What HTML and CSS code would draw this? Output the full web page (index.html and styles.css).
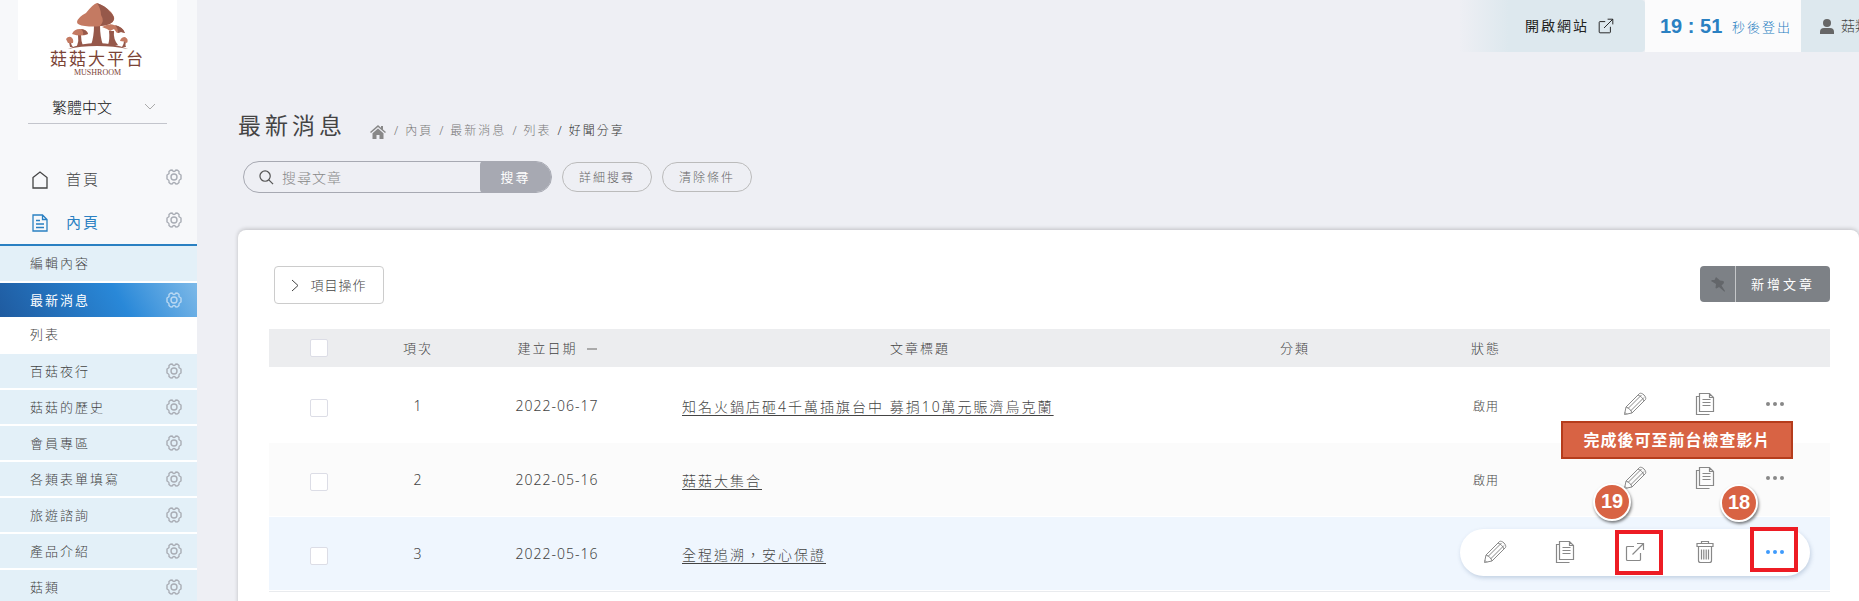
FILE: index.html
```html
<!DOCTYPE html>
<html lang="zh-Hant">
<head>
<meta charset="UTF-8">
<meta name="viewport" content="width=device-width, initial-scale=1.0">
<title>菇菇大平台 - 最新消息</title>
<link rel="stylesheet" href="styles.css">
</head>
<body>
  <svg class="sprite" aria-hidden="true">
    <symbol id="i-gear" viewBox="0 0 16 16">
      <path d="M4.500 1.200L6 1q1 1.500 2 1.500T10 1l1.500.2 1.500 1.300q-.3 2 .5 2.500l1.500 1v4l-1.500 1q-.8.5-.5 2.500l-1.500 1.300-1.500.2q-1-1.500-2-1.500T6 15l-1.500-.2L3 13.500q.3-2-.5-2.500L1 10V6l1.500-1q.8-.5.500-2.500z"/>
      <circle cx="8" cy="8" r="3"/>
    </symbol>
    <symbol id="i-pencil" viewBox="0 0 24 24">
      <path d="M1.500 22.500l1.500-7.500L16.500 1.500c2.500-1.500 7.500 3.500 6 6L9 21zM3 15c2.500.5 5.500 3.500 6 6M5 16.500L18.500 3M7.500 19L21 5.500M15 3c2.500.8 5.200 3.500 6 6M1.800 20.300l2 2"/>
    </symbol>
    <symbol id="i-copy" viewBox="0 0 20 24">
      <path d="M4.500 1.500h10l4 4v14h-14zM14.500 1.500v4h4M7.500 7.500h8M7.500 10.500h8M7.500 13.500h8M4.500 4.500h-3v18h13"/>
    </symbol>
    <symbol id="i-open" viewBox="0 0 20 20">
      <path d="M9 4.500H2.500q-1 0-1 1v12q0 1 1 1h12q1 0 1-1V11M12 1.500h6.500V8M18.500 1.500L7.500 12.500"/>
    </symbol>
    <symbol id="i-trash" viewBox="0 0 18 24">
      <path d="M1 3.500h16v3H1zM5.500 3.500v-2h7v2M2.500 6.500v14q0 2 2 2h9q2 0 2-2v-14M5.500 9.500v10M7.800 9.500v10M10.200 9.500v10M12.500 9.500v10"/>
    </symbol>
    <symbol id="i-dots" viewBox="0 0 20 6">
      <circle cx="3" cy="3" r="2"/><circle cx="10" cy="3" r="2"/><circle cx="17" cy="3" r="2"/>
    </symbol>
  </svg>

  <aside class="sidebar">
    <a class="logo" href="#">
      <svg viewBox="0 0 64 47" aria-hidden="true">
        <g fill="#96584a">
          <path d="M2 46q12-6 29-6t31 6q-14-3-31-3T2 46z"/>
          <path d="M28 22h6q0 12 3 20H25q3-8 3-20zM12 32h3q0 6 2 11h-6q2-5 1-11zM43 28h5q-1 8 4 14H42q2-6 1-14zM3 39h2q0 3 2 5H4zM58 38h2q-1 4 0 6h-4q2-3 2-6z"/>
        </g>
        <path fill="#c47a62" d="M11 19q1-5 9-9 7-9 11-10 9 4 14 9 4 5 3 8-2 5-13 6-8 1-16 0-8-1-8-4z"/>
        <path fill="#96584a" d="M31 0q9 3 12 8 5 4 5 8-1 6-14 7 5-5 1-11 0-6-4-12z"/>
        <path fill="#c47a62" d="M6 31q2-5 8-5 7 0 8 5-7 3-16 0z"/>
        <path fill="#96584a" d="M15 26q6 1 7 5l-5 1q1-3-2-6z"/>
        <path fill="#c47a62" d="M36 24q7-4 12-2 9 2 11 8l-4-1-4 1-3-4-4 2-3-2z"/>
        <path fill="#96584a" d="M49 22q8 2 10 8l-4-1-3 1q0-5-3-8z"/>
        <path fill="#c47a62" d="M0 36q2-3 5-2 3 2 2 6H2zM54 38q1-4 5-4 4 2 2 6-3-2-7-2z"/>
      </svg>
      <strong>菇菇大平台</strong>
      <small>MUSHROOM</small>
    </a>
    <div class="language">
      <select aria-label="語言">
        <option>繁體中文</option>
      </select>
      <svg viewBox="0 0 12 8" aria-hidden="true"><path d="M1 1l5 5 5-5"/></svg>
    </div>

    <nav>
      <ul class="main-nav">
        <li>
          <a href="#"><svg class="nav-icon" viewBox="0 0 16 18"><path d="M1 6.500L8 1l7 5.500v10.500H1z"/></svg><span>首頁</span></a>
          <button class="gear" aria-label="設定"><svg><use href="#i-gear"/></svg></button>
        </li>
        <li class="current">
          <a href="#"><svg class="nav-icon" viewBox="0 0 16 18"><path d="M1 1h9.500L15 5.500V17H1zM10.500 1v4.500H15M4 6.500h4M4 10h8M4 13.500h8"/></svg><span>內頁</span></a>
          <button class="gear" aria-label="設定"><svg><use href="#i-gear"/></svg></button>
        </li>
      </ul>
      <ul class="sub-nav">
        <li><a href="#">編輯內容</a></li>
        <li class="active"><a href="#">最新消息</a><button class="gear" aria-label="設定"><svg><use href="#i-gear"/></svg></button></li>
        <li class="child"><a href="#">列表</a></li>
        <li><a href="#">百菇夜行</a><button class="gear" aria-label="設定"><svg><use href="#i-gear"/></svg></button></li>
        <li><a href="#">菇菇的歷史</a><button class="gear" aria-label="設定"><svg><use href="#i-gear"/></svg></button></li>
        <li><a href="#">會員專區</a><button class="gear" aria-label="設定"><svg><use href="#i-gear"/></svg></button></li>
        <li><a href="#">各類表單填寫</a><button class="gear" aria-label="設定"><svg><use href="#i-gear"/></svg></button></li>
        <li><a href="#">旅遊諮詢</a><button class="gear" aria-label="設定"><svg><use href="#i-gear"/></svg></button></li>
        <li><a href="#">產品介紹</a><button class="gear" aria-label="設定"><svg><use href="#i-gear"/></svg></button></li>
        <li><a href="#">菇類</a><button class="gear" aria-label="設定"><svg><use href="#i-gear"/></svg></button></li>
      </ul>
    </nav>
  </aside>

  <div class="page">
    <header class="topbar">
      <a class="open-site" href="#"><span>開啟網站</span><svg><use href="#i-open"/></svg></a>
      <div class="timer"><b>19 : 51</b><span>秒後登出</span></div>
      <a class="user" href="#">
        <svg viewBox="0 0 14 15"><circle cx="7" cy="4" r="4"/><path d="M0 15v-2q0-4 4-4h6q4 0 4 4v2z"/></svg>
        <span>菇類</span>
      </a>
    </header>

    <main>
      <div class="heading">
        <h1>最新消息</h1>
        <ol class="breadcrumb">
          <li><a href="#" aria-label="首頁"><svg viewBox="0 0 16 14"><path d="M8 0l3 2.700V1h2v3.400L16 7l-1 1-7-6-7 6-1-1zM8 3.500l5.500 4.700V14H9.500v-4h-3v4h-4V8.200z"/></svg></a></li>
          <li><a href="#">內頁</a></li>
          <li><a href="#">最新消息</a></li>
          <li><a href="#">列表</a></li>
          <li class="here">好聞分享</li>
        </ol>
      </div>

      <form class="search">
        <div class="search-box">
          <svg viewBox="0 0 16 16" aria-hidden="true"><circle cx="6.500" cy="6.500" r="5.500"/><path d="M10.500 10.500l4.500 4.500"/></svg>
          <input type="text" aria-label="搜尋文章" placeholder="搜尋文章">
          <button type="submit">搜尋</button>
        </div>
        <button class="pill" type="button">詳細搜尋</button>
        <button class="pill" type="reset">清除條件</button>
      </form>

      <section class="card">
        <div class="toolbar">
          <button class="batch"><svg viewBox="0 0 8 13"><path d="M1 1l6 5.500-6 5.500"/></svg><span>項目操作</span></button>
          <div class="add">
            <button class="pin" aria-label="釘選"><svg viewBox="0 0 14 15"><path d="M5 0l4 3.500 3.500.5.500 2-2.500 2.500L14 14l-.5.700L8 10l-2.500 1.500-1-.5.500-4-5-3 1-1h2.500L4.500 1z"/></svg></button>
            <button class="new">新增文章</button>
          </div>
        </div>

        <table>
          <colgroup>
            <col class="c-check"><col class="c-no"><col class="c-date"><col><col class="c-cat"><col class="c-status"><col class="c-ops">
          </colgroup>
          <thead>
            <tr>
              <th class="check"><input type="checkbox" aria-label="全選"></th>
              <th>項次</th>
              <th>建立日期<i class="sort"></i></th>
              <th>文章標題</th>
              <th>分類</th>
              <th>狀態</th>
              <th></th>
            </tr>
          </thead>
          <tbody>
            <tr>
              <td class="check"><input type="checkbox" aria-label="選取 1"></td>
              <td>1</td>
              <td>2022-06-17</td>
              <td class="title"><a href="#">知名火鍋店砸4千萬插旗台中 募捐10萬元賑濟烏克蘭</a></td>
              <td></td>
              <td class="status">啟用</td>
              <td class="ops">
                <div class="actions">
                  <button aria-label="編輯"><svg class="pencil"><use href="#i-pencil"/></svg></button>
                  <button aria-label="複製"><svg class="copy"><use href="#i-copy"/></svg></button>
                  <button aria-label="更多"><svg class="dots"><use href="#i-dots"/></svg></button>
                </div>
              </td>
            </tr>
            <tr>
              <td class="check"><input type="checkbox" aria-label="選取 2"></td>
              <td>2</td>
              <td>2022-05-16</td>
              <td class="title"><a href="#">菇菇大集合</a></td>
              <td></td>
              <td class="status">啟用</td>
              <td class="ops">
                <div class="actions">
                  <button aria-label="編輯"><svg class="pencil"><use href="#i-pencil"/></svg></button>
                  <button aria-label="複製"><svg class="copy"><use href="#i-copy"/></svg></button>
                  <button aria-label="更多"><svg class="dots"><use href="#i-dots"/></svg></button>
                </div>
              </td>
            </tr>
            <tr class="hover">
              <td class="check"><input type="checkbox" aria-label="選取 3"></td>
              <td>3</td>
              <td>2022-05-16</td>
              <td class="title"><a href="#">全程追溯，安心保證</a></td>
              <td></td>
              <td></td>
              <td class="ops">
                <div class="actions open">
                  <button aria-label="編輯"><svg class="pencil"><use href="#i-pencil"/></svg></button>
                  <button aria-label="複製"><svg class="copy"><use href="#i-copy"/></svg></button>
                  <button aria-label="檢視"><svg class="view"><use href="#i-open"/></svg></button>
                  <button aria-label="刪除"><svg class="trash"><use href="#i-trash"/></svg></button>
                  <button class="on" aria-label="更多"><svg class="dots"><use href="#i-dots"/></svg></button>
                  <!-- step callouts -->
                  <span class="note">完成後可至前台檢查影片</span>
                  <span class="step step-19">19</span>
                  <span class="step step-18">18</span>
                  <span class="mark mark-view"></span>
                  <span class="mark mark-more"></span>
                </div>
              </td>
            </tr>
          </tbody>
        </table>
      </section>
    </main>
  </div>
</body>
</html>
```
FILE: styles.css
```css
* {
  box-sizing: border-box;
}

body {
  margin: 0;
  display: flex;
  min-height: 100vh;
  overflow: hidden;
  background: #eeeff4;
  color: #444;
  font-family: "Noto Sans", "Noto Sans CJK TC", sans-serif;
  font-size: 14px;
  font-weight: 300;
}

a {
  color: inherit;
  text-decoration: none;
}

ul,
ol {
  list-style: none;
  margin: 0;
  padding: 0;
}

button,
input,
select {
  font: inherit;
  color: inherit;
}

button {
  padding: 0;
  border: none;
  background: none;
  cursor: pointer;
}

svg {
  display: block;
  flex: none;
  fill: none;
  stroke: currentColor;
}

.sprite {
  position: absolute;
  width: 0;
  height: 0;
}

/* sidebar */
.sidebar {
  flex: none;
  width: 197px;
  background: #f7f8fa;
}

.logo {
  display: flex;
  flex-direction: column;
  align-items: center;
  width: 159px;
  height: 80px;
  margin: 0 auto 0 18px;
  padding-top: 3px;
  background: #fff;
  color: #7b4336;
}

.logo svg {
  width: 64px;
  height: 47px;
  stroke: none;
}

.logo strong {
  font-size: 17px;
  font-weight: 400;
  line-height: 18px;
  letter-spacing: 2px;
}

.logo small {
  font-family: "Liberation Serif", serif;
  font-size: 8px;
  font-weight: 400;
  line-height: 10px;
}

.language {
  display: flex;
  align-items: center;
  width: 139px;
  height: 32px;
  margin: 12px 0 0 28px;
  padding: 0 11px 2px 24px;
  border-bottom: 1px solid #c3c5cc;
  color: #111;
}

.language select {
  flex: 1;
  appearance: none;
  border: none;
  padding: 0;
  background: none;
  font-size: 15px;
}

.language svg {
  width: 12px;
  height: 8px;
  color: #aaa;
}

.main-nav {
  padding-top: 34px;
}

.main-nav li,
.sub-nav li {
  display: flex;
  align-items: center;
  justify-content: space-between;
  padding-right: 15px;
}

.main-nav li {
  height: 43px;
}

.main-nav a {
  display: flex;
  align-items: center;
  padding-left: 32px;
  font-size: 15px;
  letter-spacing: 2px;
}

.main-nav span,
.sub-nav a,
.open-site span,
.user span,
.batch span {
  padding-bottom: 2px;
}

.nav-icon {
  width: 16px;
  height: 18px;
  margin-right: 18px;
  stroke-width: 1.300;
}

.main-nav .current {
  color: #2a80c2;
  font-weight: 400;
}

.gear,
.main-nav .current .gear {
  color: #a9adb5;
}

.main-nav .gear {
  margin-bottom: 6px;
}

.gear svg {
  width: 16px;
  height: 16px;
  stroke-width: 1.400;
}

.sub-nav {
  border-top: 2px solid #2a80c2;
}

.sub-nav li {
  height: 36px;
  padding-left: 30px;
  border-bottom: 2px solid #fff;
  background: #e3f0f8;
  font-size: 13px;
  letter-spacing: 2px;
}

.sub-nav li:first-child {
  height: 37px;
}

.sub-nav .active {
  border-bottom: none;
  height: 34px;
  background: linear-gradient(60deg, #1f5ba0, #2988d8 60%, #7db9e8);
  color: #fff;
  font-weight: 400;
}

.sub-nav .active .gear {
  color: #b9d8f2;
}

.sub-nav .child {
  height: 37px;
  background: #fff;
}

/* top bar */
.page {
  flex: 1;
  min-width: 0;
}

.topbar {
  display: flex;
  justify-content: flex-end;
  height: 52px;
}

.topbar > * {
  display: flex;
  align-items: center;
}

.open-site {
  padding: 0 31px 0 66px;
  background: linear-gradient(to right, #eeeff4, #dde8ee 50px);
  color: #222;
  font-weight: 400;
  letter-spacing: 2px;
  border-radius: 0 4px 4px 0;
}

.open-site svg {
  width: 16px;
  height: 16px;
  margin-left: 9px;
}

.timer {
  width: 156px;
  padding-left: 15px;
  background: #fbfbfc;
  color: #2a80c2;
}

.timer b {
  width: 72px;
  font-family: "Liberation Sans", sans-serif;
  font-size: 20px;
  font-weight: 700;
}

.timer span {
  font-size: 13px;
  letter-spacing: 2px;
}

.user {
  width: 58px;
  padding-left: 19px;
  overflow: hidden;
  background: #dde8ee;
  white-space: nowrap;
}

.user svg {
  width: 14px;
  height: 15px;
  margin-right: 7px;
  fill: #666;
  stroke: none;
}

/* heading and search */
main {
  padding: 54px 0 0 41px;
}

.heading {
  display: flex;
  align-items: flex-end;
  height: 37px;
}

h1 {
  margin: 0 24px 0 0;
  font-size: 23px;
  font-weight: 400;
  line-height: 36px;
  letter-spacing: 4px;
}

.breadcrumb {
  display: flex;
  align-items: center;
  font-size: 12px;
  line-height: 25px;
  letter-spacing: 2px;
  color: #777;
}

.breadcrumb svg {
  width: 16px;
  height: 14px;
  margin: 2px 2px 0 0;
  fill: #888;
  stroke: none;
}

.breadcrumb li + li::before {
  content: "/";
  margin: 0 5px 0 6px;
}

.breadcrumb .here {
  color: #333;
}

.search {
  display: flex;
  align-items: center;
  gap: 10px;
  margin: 18px 0 37px 5px;
}

.search-box {
  display: flex;
  align-items: center;
  width: 309px;
  height: 32px;
  padding-left: 15px;
  overflow: hidden;
  border: 1px solid #a7a9b2;
  border-radius: 16px;
}

.search-box svg {
  width: 15px;
  height: 15px;
  color: #555;
  stroke-width: 1.300;
}

.search-box input {
  flex: 1;
  min-width: 0;
  padding: 0 0 0 8px;
  border: none;
  outline: none;
  background: none;
  letter-spacing: 1px;
}

.search-box input::placeholder {
  color: #888;
}

.search-box button {
  width: 71px;
  height: 32px;
  padding-bottom: 2px;
  border-radius: 4px 0 0 4px;
  background: #a7a9b2;
  color: #fff;
  font-size: 13px;
  font-weight: 400;
  letter-spacing: 2px;
}

.pill {
  width: 90px;
  height: 30px;
  border: 1px solid #bbb;
  border-radius: 15px;
  color: #666;
  font-size: 12px;
  letter-spacing: 2px;
}

/* list */
.card {
  min-height: 400px;
  padding: 36px 29px 0 31px;
  border-radius: 8px;
  background: #fff;
  box-shadow: 0 -1px 4px rgba(0, 0, 0, 0.2);
}

.toolbar {
  display: flex;
  justify-content: space-between;
  align-items: flex-start;
  margin-bottom: 25px;
  padding-left: 5px;
}

.batch {
  display: flex;
  align-items: center;
  justify-content: center;
  gap: 11px;
  width: 110px;
  height: 38px;
  border: 1px solid #ccc;
  border-radius: 4px;
  font-size: 13px;
  letter-spacing: 1px;
}

.batch svg {
  width: 8px;
  height: 13px;
}

.add {
  display: flex;
  height: 36px;
  overflow: hidden;
  border-radius: 4px;
  background: #7d8186;
}

.pin {
  width: 36px;
  padding-left: 11px;
  border-right: 1px solid #c5c7c9;
}

.pin svg {
  width: 14px;
  height: 15px;
  fill: #63666a;
  stroke: none;
}

.new {
  width: 94px;
  padding-bottom: 2px;
  color: #fff;
  font-size: 13px;
  font-weight: 400;
  letter-spacing: 3px;
}

table {
  width: 100%;
  table-layout: fixed;
  border-collapse: separate;
  border-spacing: 0;
  border-bottom: 1px solid #e9ebee;
  text-align: center;
}

.c-check {
  width: 100px;
}

.c-no {
  width: 98px;
}

.c-date {
  width: 180px;
}

.c-cat {
  width: 204px;
}

.c-status {
  width: 178px;
}

.c-ops {
  width: 255px;
}

th,
td {
  padding: 0;
}

th {
  height: 40px;
  padding-bottom: 2px;
  border-bottom: 2px solid #fff;
  background: #ecedef;
  background-clip: padding-box;
  font-size: 13px;
  font-weight: 300;
  letter-spacing: 2px;
}

th.check {
  padding-bottom: 0;
}

td {
  height: 74px;
  border-bottom: 1px solid #fff;
  letter-spacing: 1px;
}

td.check {
  padding-top: 4px;
}

td.ops {
  padding-bottom: 3px;
}

tbody tr:nth-child(2) {
  background: #fbfbfb;
}

tbody .hover {
  background: #eff6fe;
}

.sort {
  display: inline-block;
  width: 10px;
  height: 2px;
  margin-left: 9px;
  background: #aaa;
  vertical-align: middle;
}

input[type="checkbox"] {
  display: block;
  appearance: none;
  width: 18px;
  height: 18px;
  margin: 0 auto;
  border: 1px solid #dcdde6;
  border-radius: 2px;
  background: #fff;
}

td.title {
  padding-left: 35px;
  text-align: left;
  letter-spacing: 2px;
}

.title a {
  text-decoration: underline;
  text-underline-offset: 3px;
}

.status {
  font-size: 12px;
}

.actions {
  display: flex;
  justify-content: flex-end;
  padding-right: 20px;
}

.actions button {
  display: flex;
  align-items: center;
  justify-content: center;
  width: 70px;
  height: 47px;
  color: #888;
}

.actions .on {
  color: #3f9bfc;
}

.actions.open {
  position: relative;
  width: 350px;
  margin-left: -115px;
  padding: 0;
  border-radius: 24px;
  background: #fff;
  box-shadow: 1px 2px 4px rgba(90, 120, 160, 0.3);
}

.pencil {
  width: 24px;
  height: 24px;
}

.copy {
  width: 20px;
  height: 24px;
}

.view {
  width: 20px;
  height: 20px;
}

.open-site svg,
.actions svg {
  stroke-width: 1.200;
}

.actions .pencil {
  stroke-width: 1;
}

.trash {
  width: 18px;
  height: 24px;
}

.dots {
  width: 20px;
  height: 6px;
  fill: currentColor;
  stroke: none;
}

/* callouts drawn over the list */
.note {
  position: absolute;
  top: -108px;
  left: 101px;
  width: 232px;
  border: 2px solid #b53c1c;
  background: #d86344;
  color: #fff;
  font-size: 16px;
  font-weight: 700;
  line-height: 34px;
}

.step {
  position: absolute;
  width: 38px;
  height: 38px;
  border: 2px solid #fff;
  border-radius: 50%;
  background: #d86344;
  box-shadow: 1px 2px 3px rgba(0, 0, 0, 0.5);
  color: #fff;
  font-family: "Liberation Sans", sans-serif;
  font-size: 20px;
  font-weight: 700;
  line-height: 32px;
  letter-spacing: 0;
}

.step-19 {
  top: -46px;
  left: 133px;
}

.step-18 {
  top: -45px;
  left: 260px;
}

.mark {
  position: absolute;
  width: 48px;
  height: 45px;
  border: 4px solid #ed1c24;
}

.mark-view {
  top: 1px;
  left: 155px;
}

.mark-more {
  top: -2px;
  left: 290px;
}
```
